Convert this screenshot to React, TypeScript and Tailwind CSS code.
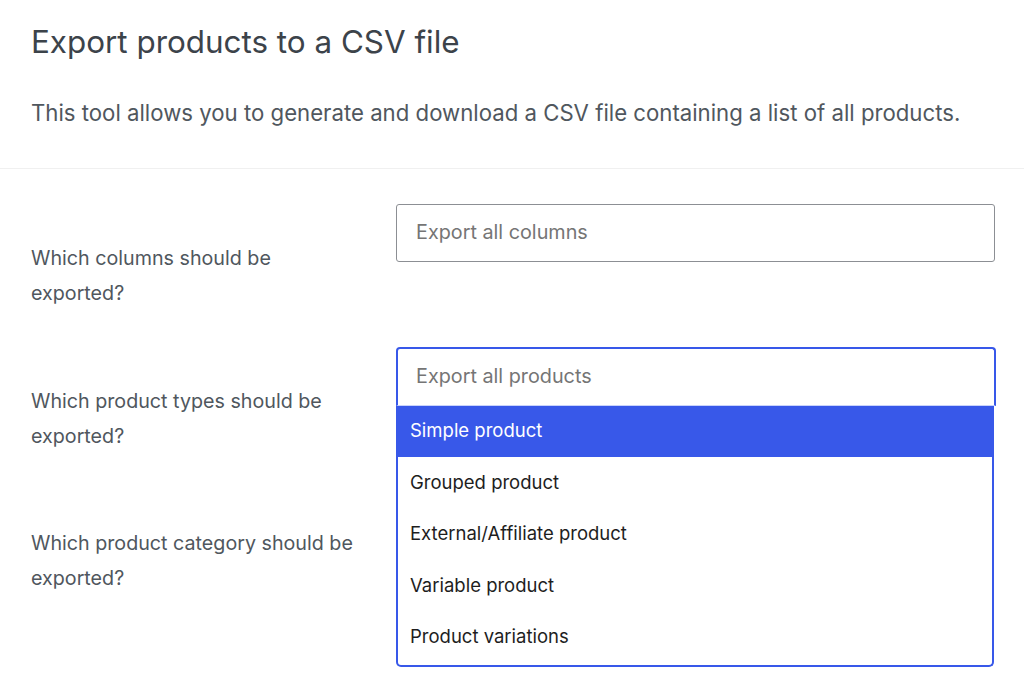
import React from "react";

const font = { fontFamily: "Inter, 'Noto Sans', sans-serif" };

function Row({ label, children }: { label: [string, string]; children?: React.ReactNode }) {
  return (
    <div className="flex h-[142.5px] items-start">
      <div className="w-[396px] shrink-0 pl-[31px] pt-[51px] text-[19.7px] leading-[35px] text-[#50575e]">
        <div>{label[0]}</div>
        <div>{label[1]}</div>
      </div>
      <div className="relative mt-[14px] w-[602px]">{children}</div>
    </div>
  );
}

export default function App() {
  const options = [
    "Simple product",
    "Grouped product",
    "External/Affiliate product",
    "Variable product",
    "Product variations",
  ];
  return (
    <div className="min-h-[673px] w-[1024px] overflow-hidden bg-white" style={font}>
      <div className="pl-[31px] pt-[20px]">
        <h1 className="text-[31.4px] leading-[44px] text-[#3c434a]">Export products to a CSV file</h1>
        <p className="mt-[32px] text-[22.2px] leading-[34px] text-[#50575e]">
          This tool allows you to generate and download a CSV file containing a list of all products.
        </p>
      </div>
      <div className="mt-[38px] h-px bg-[#f0f0f0]" />
      <div className="pt-[21px]">
        <Row label={["Which columns should be", "exported?"]}>
          <div className="flex h-[58px] w-[599px] items-center rounded-[3px] border border-[#8c8f94] px-[19px] text-[19.8px] text-[#757575]">
            Export all columns
          </div>
        </Row>
        <Row label={["Which product types should be", "exported?"]}>
          <div className="relative z-10">
            <div className="flex h-[59px] w-[600px] items-center rounded-t-[4px] border-2 border-b border-[#3858e9] border-b-[#c9d3fb] px-[18px] text-[19.8px] text-[#757575]">
              Export all products
            </div>
            <div className="absolute left-0 top-[59px] w-[598px] rounded-b-[5px] border-2 border-t-0 border-[#3858e9] bg-white pb-[2px]">
              {options.map((o, i) => (
                <div
                  key={o}
                  className={
                    "flex h-[51.5px] items-center pl-[12px] text-[18.5px] " +
                    (i === 0 ? "bg-[#3858e9] text-white" : "text-[#1e1e1e]")
                  }
                >
                  {o}
                </div>
              ))}
            </div>
          </div>
        </Row>
        <Row label={["Which product category should be", "exported?"]} />
      </div>
    </div>
  );
}
